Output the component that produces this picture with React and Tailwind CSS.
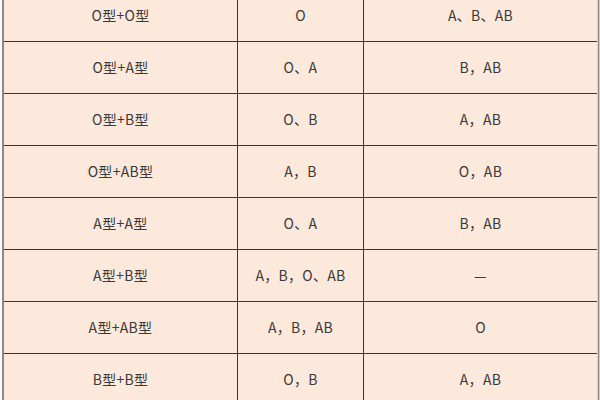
export default function App() {
  const rows = [
    ["O型+O型", "O", "A、B、AB"],
    ["O型+A型", "O、A", "B，AB"],
    ["O型+B型", "O、B", "A，AB"],
    ["O型+AB型", "A，B", "O，AB"],
    ["A型+A型", "O、A", "B，AB"],
    ["A型+B型", "A，B，O、AB", "—"],
    ["A型+AB型", "A，B，AB", "O"],
    ["B型+B型", "O，B", "A，AB"],
  ];
  return (
    <div
      className="w-[600px] h-[400px] overflow-hidden bg-[#f4f1ee] flex"
      style={{ fontFamily: '"Noto Sans CJK SC", "Noto Sans", sans-serif' }}
    >
      <div className="w-[2px] bg-[#fbfaf8]" />
      <div className="w-[2px] bg-[#8c8886]" />
      <div className="flex-1 bg-[#fde9dc] flex flex-col mt-[-10px]">
        {rows.map((r, i) => (
          <div key={i} className="flex h-[52px] shrink-0 border-b-[1.5px] border-[#3d3330] text-[14px] tracking-[0.3px] text-[#3a3a3a] items-center">
            <div className="w-[234px] h-full flex items-center justify-center border-r-[1.5px] border-[#3d3330]">{r[0]}</div>
            <div className="w-[126px] h-full flex items-center justify-center border-r-[1.5px] border-[#3d3330]">{r[1]}</div>
            <div className="flex-1 h-full flex items-center justify-center">{r[2]}</div>
          </div>
        ))}
      </div>
      <div className="w-[1px] bg-[#d9d4d0]" />
      <div className="w-[1px] bg-[#8c8886]" />
      <div className="w-[1px] bg-[#d0ccc8]" />
    </div>
  );
}
